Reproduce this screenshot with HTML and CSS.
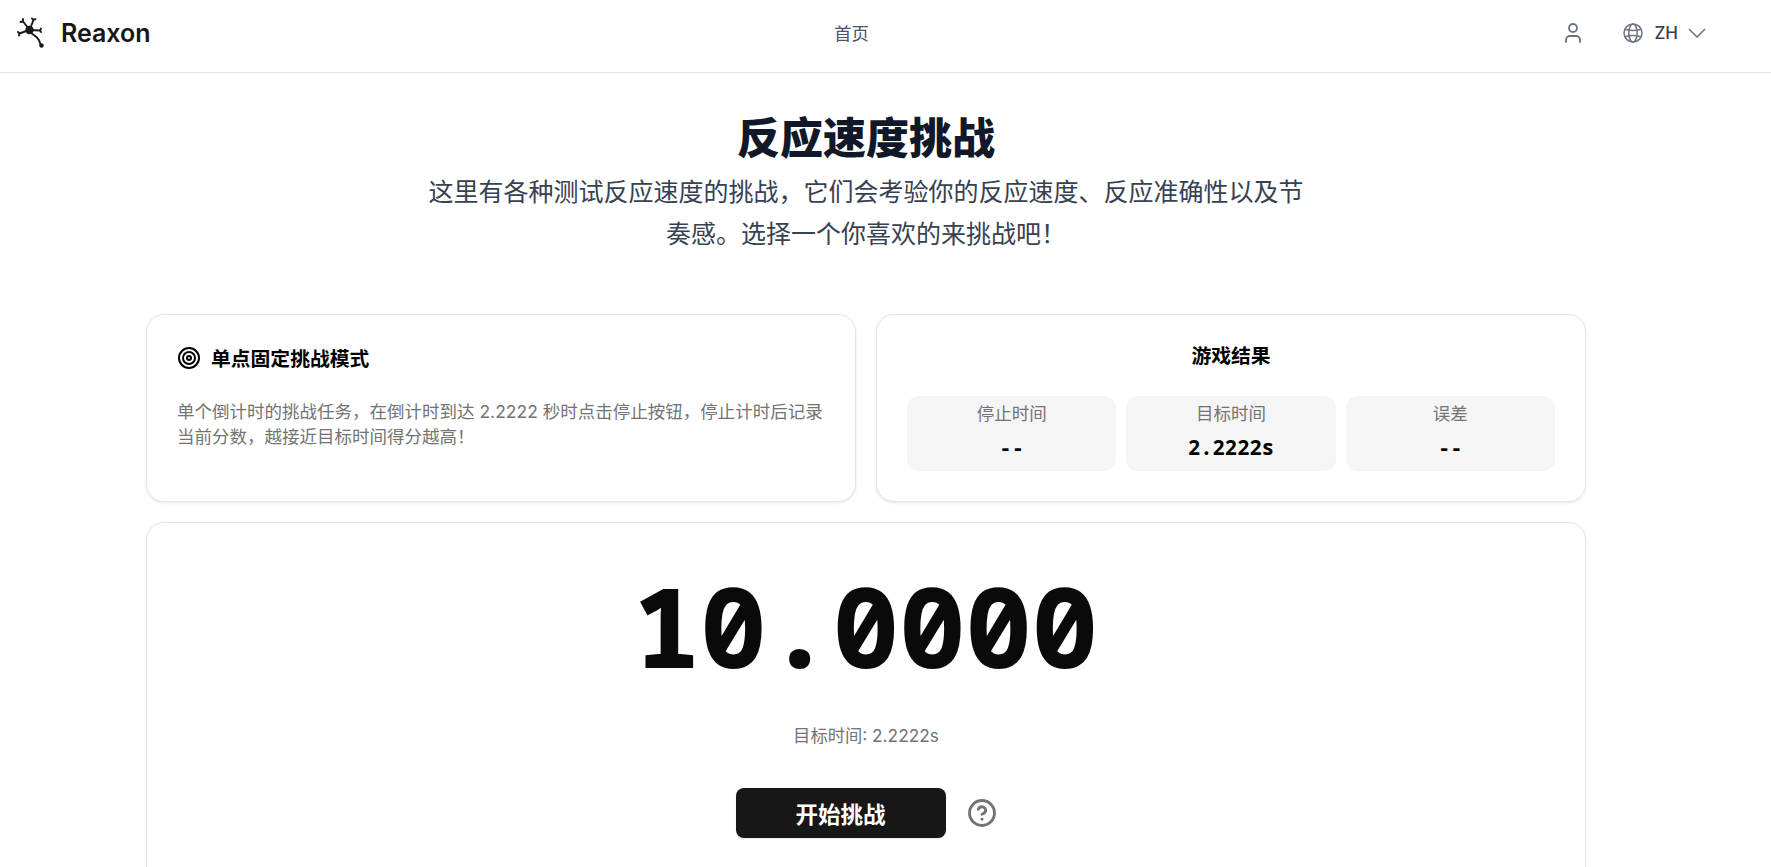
FILE: index.html
```html
<!DOCTYPE html>
<html lang="zh">
<head>
  <meta charset="UTF-8">
  <meta name="viewport" content="width=device-width, initial-scale=1.0">
  <title>Reaxon</title>
  <link rel="stylesheet" href="styles.css">
</head>
<body>
  <header class="topbar">
    <a class="brand" href="#">
      <svg class="brand-logo" viewBox="16 14 30 34" fill="none" stroke="#1a1a1a" stroke-linecap="round" stroke-linejoin="round" stroke-width="1.9">
        <circle cx="29.5" cy="29" r="4.200" fill="#1a1a1a" stroke="none"/>
        <path d="M29 28 23 20.5M23 20.5l-2.5.5M23 20.5l0-2.5"/>
        <path d="M30 28 33.5 19M33.5 19l-1.6-1.6M33.5 19l2-.8"/>
        <path d="M30 29 40 29.5M40 29.5l1-2M40 29.5l1 1.6"/>
        <path d="M29 29 19.5 32.5M19.5 32.5l-1.500-1.500M19.500 32.500l-.5 2"/>
        <path d="M30 30c2 4 5 4.500 7 6.500 2 2 3 3 3.500 7"/>
        <circle cx="41.500" cy="44.500" r="2.200" fill="#1a1a1a" stroke="none"/>
      </svg>
      <span class="brand-name">Reaxon</span>
    </a>
    <nav class="topnav"><a href="#">首页</a></nav>
    <div class="topbar-actions">
      <svg class="icon-user" viewBox="0 0 24 24" fill="none" stroke="#6b7280" stroke-width="1.8" stroke-linecap="round" stroke-linejoin="round">
        <path d="M19 21v-2a4 4 0 0 0-4-4H9a4 4 0 0 0-4 4v2"/>
        <circle cx="12" cy="7" r="4"/>
      </svg>
      <div class="lang">
        <svg class="icon-globe" viewBox="0 0 24 24" fill="none" stroke="#6b7280" stroke-width="1.8">
          <circle cx="12" cy="12" r="10.800"/>
          <ellipse cx="12" cy="12" rx="5" ry="10.800"/>
          <path d="M2.500 7.500q9.500 3 19 0M2.500 16.500q9.500-3 19 0"/>
        </svg>
        <span class="lang-code">ZH</span>
        <svg class="icon-chevron" viewBox="0 0 18 10" fill="none" stroke="#6b7280" stroke-width="1.500">
          <path d="M1 1l8 8 8-8"/>
        </svg>
      </div>
    </div>
  </header>

  <main class="content">
    <section class="intro">
      <h1>反应速度挑战</h1>
      <p class="subtitle">这里有各种测试反应速度的挑战，它们会考验你的反应速度、反应准确性以及节奏感。选择一个你喜欢的来挑战吧！</p>
    </section>

    <div class="cards-row">
      <section class="card card-mode">
        <h2 class="mode-title">
          <svg class="icon-target" viewBox="0 0 24 24" fill="none" stroke="#000" stroke-width="2">
            <circle cx="12" cy="12" r="10"/>
            <circle cx="12" cy="12" r="6"/>
            <circle cx="12" cy="12" r="2"/>
          </svg>
          单点固定挑战模式
        </h2>
        <p class="mode-desc">单个倒计时的挑战任务，在倒计时到达 2.2222 秒时点击停止按钮，停止计时后记录当前分数，越接近目标时间得分越高！</p>
      </section>

      <section class="card card-result">
        <h2 class="result-title">游戏结果</h2>
        <div class="stats">
          <div class="stat"><span class="stat-label">停止时间</span><span class="stat-value">--</span></div>
          <div class="stat"><span class="stat-label">目标时间</span><span class="stat-value">2.2222s</span></div>
          <div class="stat"><span class="stat-label">误差</span><span class="stat-value">--</span></div>
        </div>
      </section>
    </div>

    <section class="card card-timer">
      <div class="timer">10.0000</div>
      <p class="timer-target">目标时间: 2.2222s</p>
      <div class="timer-actions">
        <button class="start-button">开始挑战</button>
        <svg class="icon-help" viewBox="0 0 24 24" fill="none" stroke="#737373" stroke-width="2.300" stroke-linecap="round" stroke-linejoin="round">
          <circle cx="12" cy="12" r="10"/>
          <path d="M9.090 9a3 3 0 0 1 5.830 1c0 2-3 3-3 3"/>
          <path d="M12 17h.01"/>
        </svg>
      </div>
    </section>
  </main>
</body>
</html>
```

FILE: styles.css
```css
* {
  margin: 0;
  padding: 0;
  box-sizing: border-box;
}

html, body {
  height: 100%;
  overflow: hidden;
}

body {
  font-family: 'Inter', 'Noto Sans CJK SC', sans-serif;
  background: #fff;
  color: #171717;
}

a {
  color: inherit;
  text-decoration: none;
}

.topbar {
  height: 73px;
  display: flex;
  align-items: center;
  justify-content: space-between;
  padding: 0 65px 7px 16px;
  border-bottom: 1px solid #e5e5e5;
}

.brand {
  display: flex;
  align-items: center;
  gap: 15px;
}

.brand-logo {
  width: 30px;
  height: 34px;
  margin-top: -2px;
}

.brand-name {
  font-size: 25px;
  font-weight: 600;
  color: #171717;
}

.topnav {
  font-size: 17.500px;
  color: #4b5563;
  margin-right: 9px;
}

.topbar-actions {
  display: flex;
  align-items: center;
  gap: 38px;
}

.icon-user {
  width: 24px;
  height: 24px;
}

.lang {
  display: flex;
  align-items: center;
  gap: 11px;
}

.icon-globe {
  width: 20px;
  height: 20px;
}

.lang-code {
  font-size: 17px;
  font-weight: 500;
  color: #374151;
}

.icon-chevron {
  width: 18px;
  height: 10px;
  margin-left: -1px;
}

.content {
  width: 1440px;
  margin-left: 146px;
}

.intro {
  text-align: center;
  padding-top: 32px;
  margin-bottom: 59px;
}

h1 {
  font-size: 43px;
  font-weight: 800;
  line-height: 66px;
  color: #111827;
}

.subtitle {
  font-size: 25px;
  line-height: 42px;
  color: #374151;
  width: 890px;
  margin: 0 auto;
}

.cards-row {
  display: grid;
  grid-template-columns: 1fr 1fr;
  gap: 20px;
  margin-bottom: 20px;
}

.card {
  background: #fff;
  border: 1px solid #e5e5e5;
  border-radius: 18px;
  box-shadow: 0 1px 3px rgba(0, 0, 0, 0.1);
}

.card-mode,
.card-result {
  height: 188px;
  padding: 28px 30px;
}

.card-mode {
  padding-right: 26px;
}

.card-result {
  padding-top: 25px;
}

.mode-title {
  display: flex;
  align-items: center;
  gap: 10px;
  font-size: 19.800px;
  font-weight: 700;
  color: #000;
  margin-bottom: 27px;
}

.icon-target {
  width: 24px;
  height: 24px;
}

.mode-desc {
  font-size: 17.500px;
  line-height: 25px;
  color: #737373;
}

.result-title {
  text-align: center;
  font-size: 19.800px;
  font-weight: 700;
  color: #000;
  margin-bottom: 27px;
}

.stats {
  display: grid;
  grid-template-columns: repeat(3, 1fr);
  gap: 10px;
}

.stat {
  height: 75px;
  background: #f5f5f5;
  border-radius: 12px;
  display: flex;
  flex-direction: column;
  align-items: center;
  padding-top: 4px;
}

.stat-label {
  font-size: 17.500px;
  line-height: 28px;
  color: #737373;
}

.stat-value {
  font-family: 'Noto Sans Mono', monospace;
  font-size: 20.500px;
  font-weight: 700;
  line-height: 30px;
  margin-top: 4px;
  color: #000;
}

.card-timer {
  height: 420px;
  display: flex;
  flex-direction: column;
  align-items: center;
  padding-top: 40px;
}

.timer {
  font-family: 'Noto Sans Mono', monospace;
  font-size: 110.500px;
  font-weight: 800;
  line-height: 124px;
  color: #0a0a0a;
}

.timer-target {
  font-size: 17.300px;
  line-height: 26px;
  color: #737373;
  margin-top: 36px;
}

.timer-actions {
  display: flex;
  align-items: center;
  gap: 21px;
  margin-top: 39px;
}

.start-button {
  width: 210px;
  height: 50px;
  border: none;
  border-radius: 8px;
  background: #171717;
  color: #fff;
  font-family: inherit;
  font-size: 22.500px;
  font-weight: 600;
  box-shadow: 0 1px 2px rgba(0, 0, 0, 0.1);
}

.icon-help {
  width: 30px;
  height: 30px;
}
```
